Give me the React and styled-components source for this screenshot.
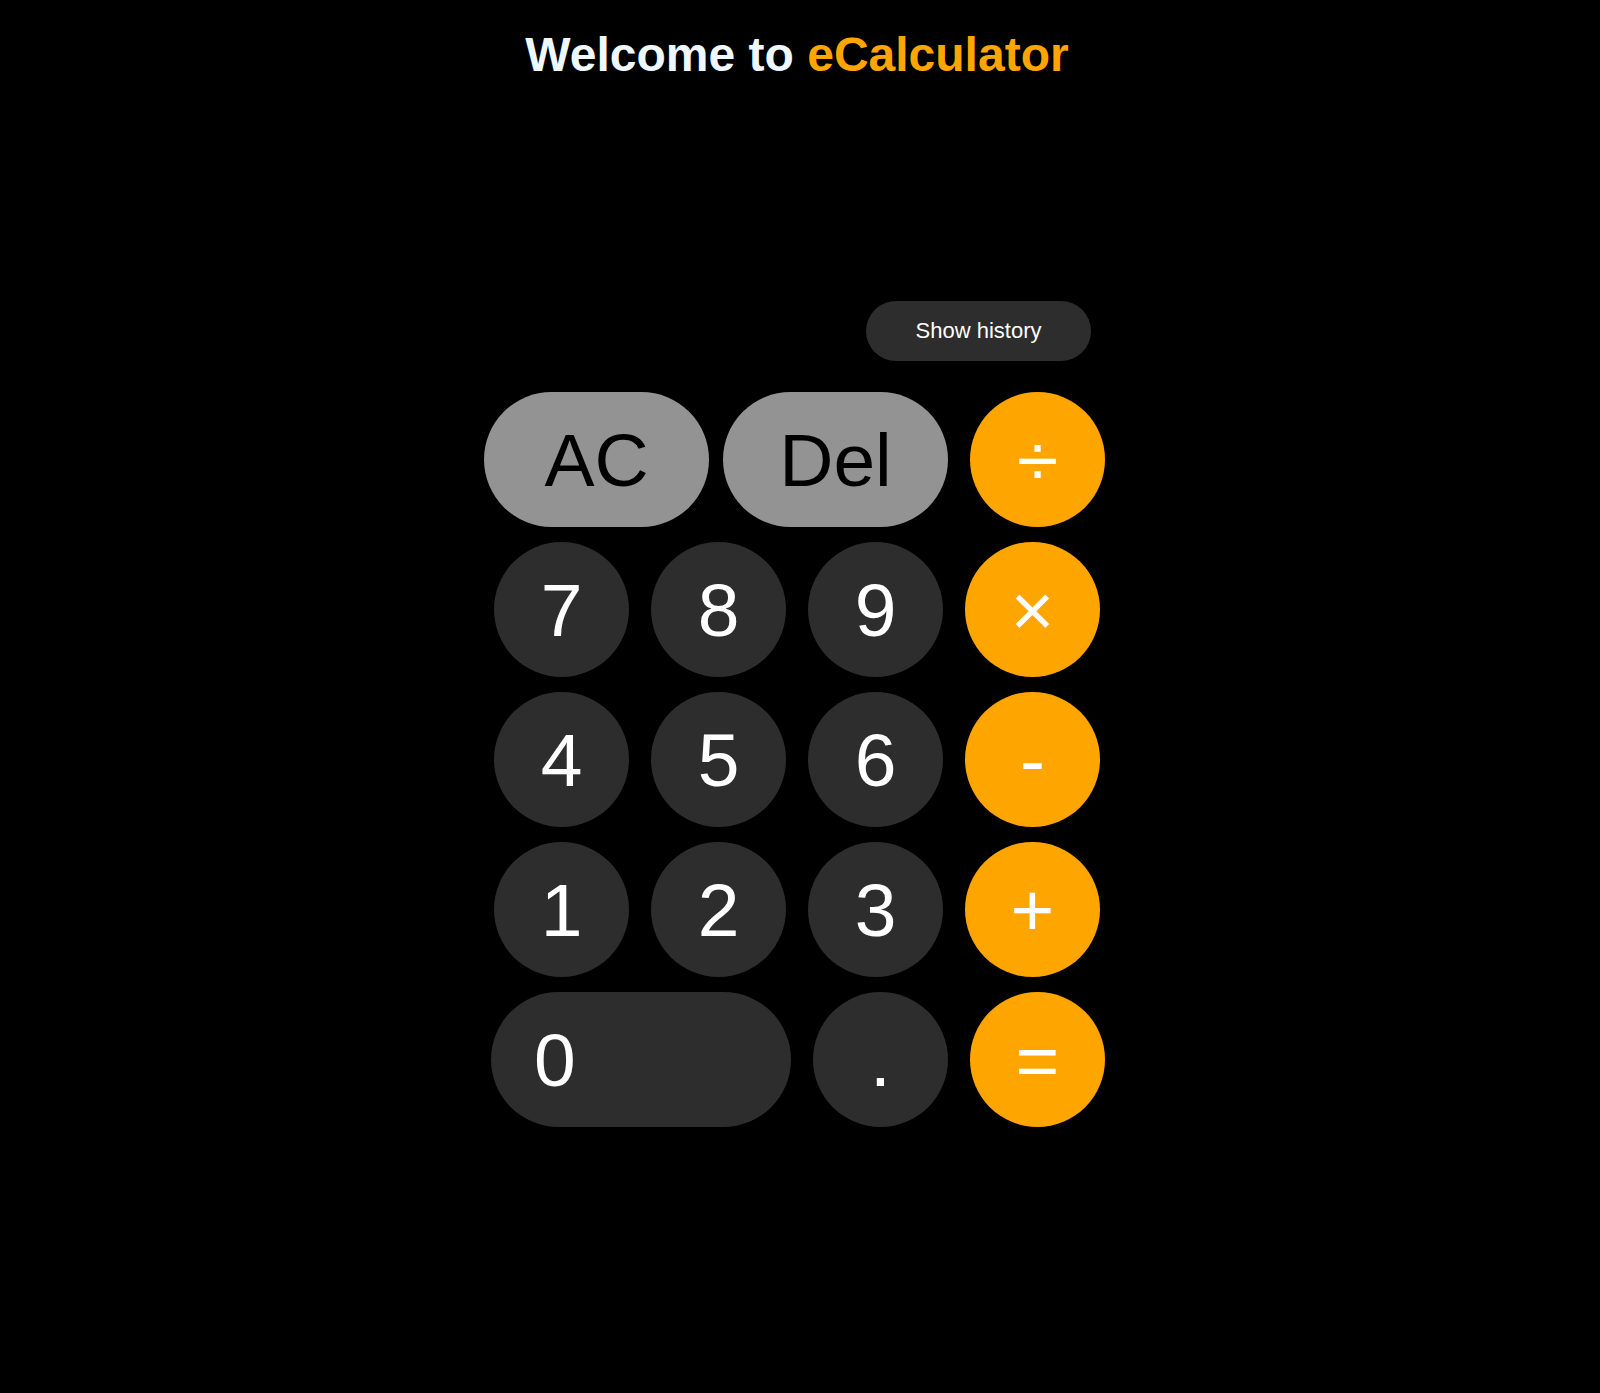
import React from "react";
import styled, { createGlobalStyle } from "styled-components";

const GlobalStyle = createGlobalStyle`
  html,
  body {
    margin: 0;
    padding: 0;
    background-color: #000;
    min-height: 100%;
  }
  body {
    font-family: "Liberation Sans", Arial, sans-serif;
  }
`;

const PageStyled = styled.div`
  box-sizing: border-box;
  min-height: 1393px;
  padding: 27px 6px 0 0;
  display: flex;
  flex-direction: column;
  align-items: center;
  background-color: #000;
`;

const TitleStyled = styled.h1`
  margin: 0;
  font-size: 48px;
  font-weight: bold;
  color: aliceblue;
  text-align: center;
`;

const BrandStyled = styled.span`
  color: orange;
`;

const CalculatorStyled = styled.div`
  width: 622px;
  margin-right: 6px;
  display: flex;
  flex-direction: column;
`;

const DisplayStyled = styled.div`
  height: 219px;
  color: white;
  font-size: 75px;
  text-align: right;
`;

const HistoryButtonStyled = styled.button`
  align-self: flex-end;
  margin-right: 14px;
  width: 225px;
  height: 60px;
  border: none;
  border-radius: 30px;
  background-color: #2d2d2d;
  color: white;
  font-family: "Liberation Sans", Arial, sans-serif;
  font-size: 22px;
  cursor: pointer;
`;

const KeypadStyled = styled.div`
  margin-top: 31px;
  display: flex;
  flex-direction: column;
  gap: 15px;
`;

const RowStyled = styled.div`
  display: flex;
  justify-content: flex-end;
  gap: ${(props) => props.$gap || 22}px;
  padding-right: ${(props) => props.$inset || 0}px;
`;

const GroupStyled = styled.div`
  display: flex;
  gap: 14px;
`;

const colors = {
  light: { bg: "#939393", fg: "#000" },
  dark: { bg: "#2d2d2d", fg: "#fff" },
  accent: { bg: "orange", fg: "#fff" },
};

const KeyStyled = styled.button`
  box-sizing: border-box;
  flex: none;
  width: ${(props) => props.$width || 135}px;
  height: 135px;
  padding: ${(props) => (props.$left ? "0 0 0 43px" : "0")};
  border: none;
  border-radius: 68px;
  display: flex;
  align-items: center;
  justify-content: ${(props) => (props.$left ? "flex-start" : "center")};
  background-color: ${(props) => colors[props.$kind || "dark"].bg};
  color: ${(props) => colors[props.$kind || "dark"].fg};
  font-family: "Liberation Sans", Arial, sans-serif;
  font-size: 75px;
  line-height: normal;
  cursor: pointer;
`;

const rows = [
  ["7", "8", "9", "×"],
  ["4", "5", "6", "-"],
  ["1", "2", "3", "+"],
];

const App = () => {
  return (
    <>
      <GlobalStyle />
      <PageStyled>
        <TitleStyled>
          Welcome to <BrandStyled>eCalculator</BrandStyled>
        </TitleStyled>
        <CalculatorStyled>
          <DisplayStyled />
          <HistoryButtonStyled>Show history</HistoryButtonStyled>
          <KeypadStyled>
            <RowStyled $gap={22}>
              <GroupStyled>
                <KeyStyled $kind="light" $width={225}>
                  AC
                </KeyStyled>
                <KeyStyled $kind="light" $width={225}>
                  Del
                </KeyStyled>
              </GroupStyled>
              <KeyStyled $kind="accent">÷</KeyStyled>
            </RowStyled>
            {rows.map((row, i) => (
              <RowStyled key={i} $gap={22} $inset={5}>
                {row.map((k, j) => (
                  <KeyStyled key={k} $kind={j === 3 ? "accent" : "dark"}>
                    {k}
                  </KeyStyled>
                ))}
              </RowStyled>
            ))}
            <RowStyled $gap={22}>
              <KeyStyled $width={300} $left>
                0
              </KeyStyled>
              <KeyStyled>.</KeyStyled>
              <KeyStyled $kind="accent">=</KeyStyled>
            </RowStyled>
          </KeypadStyled>
        </CalculatorStyled>
      </PageStyled>
    </>
  );
};

export default App;
